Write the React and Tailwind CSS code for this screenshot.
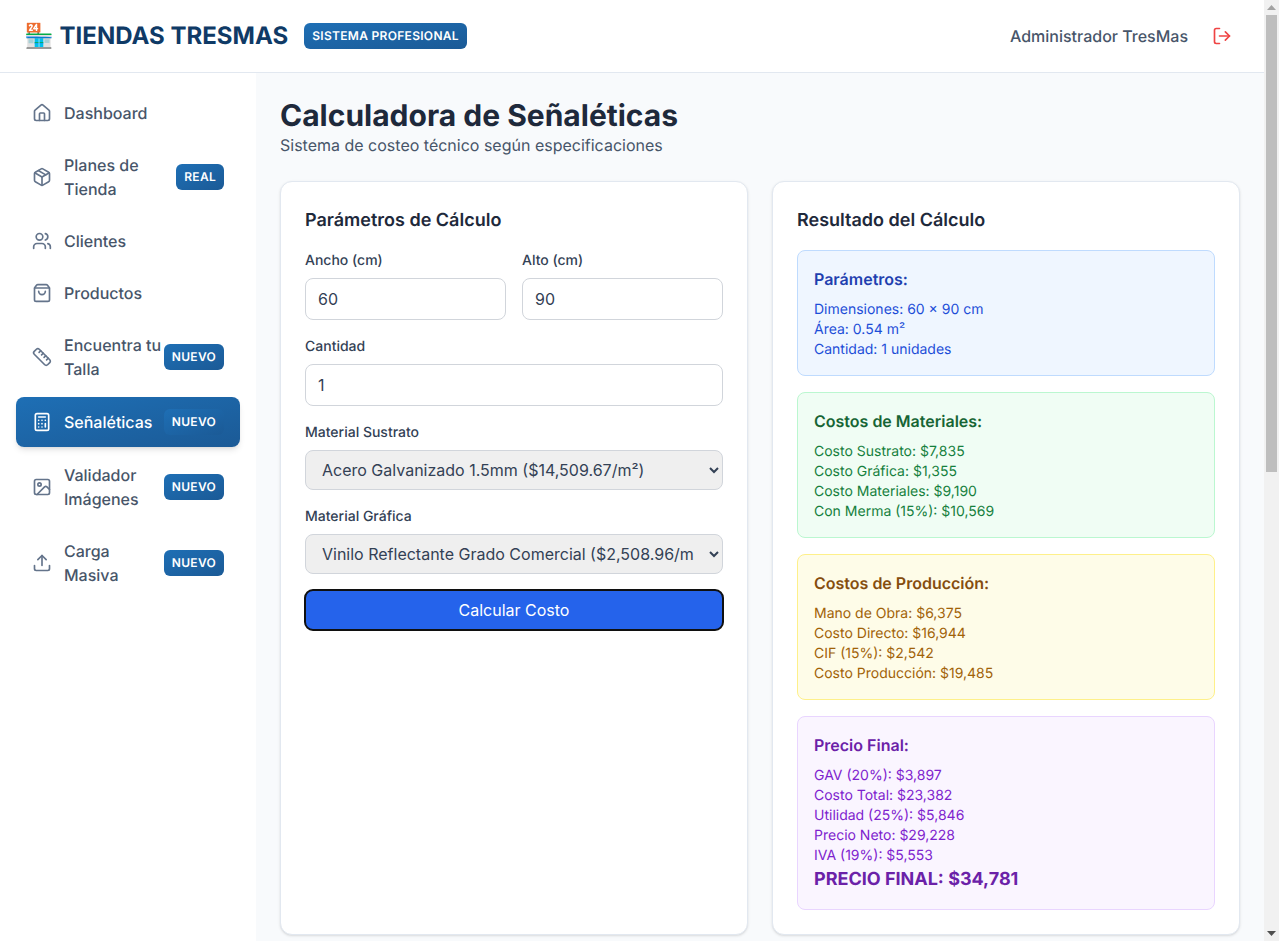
import { House, Package, Users, ShoppingBag, Ruler, Calculator, Image, Upload, LogOut } from "lucide-react";

const navItems = [
  { label: "Dashboard", icon: House },
  { label: "Planes de Tienda", icon: Package, badge: "REAL" },
  { label: "Clientes", icon: Users },
  { label: "Productos", icon: ShoppingBag },
  { label: "Encuentra tu Talla", icon: Ruler, badge: "NUEVO" },
  { label: "Señaléticas", icon: Calculator, badge: "NUEVO", active: true },
  { label: "Validador Imágenes", icon: Image, badge: "NUEVO" },
  { label: "Carga Masiva", icon: Upload, badge: "NUEVO" },
];

function Badge({ children }) {
  return (
    <span className="shrink-0 rounded-md bg-gradient-to-br from-[#1e6fb5] to-[#1b5a96] px-2 py-[5px] text-xs font-semibold tracking-wide text-white">
      {children}
    </span>
  );
}

function NavItem({ item }) {
  const Icon = item.icon;
  return (
    <a
      className={
        item.active
          ? "flex items-center justify-between rounded-lg bg-gradient-to-br from-[#1e6fb5] to-[#1b5a96] px-4 py-3 font-medium text-white shadow-md"
          : "flex items-center justify-between rounded-lg px-4 py-3 font-medium text-[#475569]"
      }
    >
      <div className="flex min-w-0 items-center gap-3">
        <Icon className={item.active ? "h-5 w-5 shrink-0 text-white" : "h-5 w-5 shrink-0 text-[#64748b]"} />
        <span>{item.label}</span>
      </div>
      {item.badge && <Badge>{item.badge}</Badge>}
    </a>
  );
}

function Field({ label, children }) {
  return (
    <div>
      <label className="mb-[7px] block pt-px text-sm font-medium text-[#334155]">{label}</label>
      {children}
    </div>
  );
}

function TextInput({ value }) {
  return (
    <input
      type="text"
      defaultValue={value}
      className="block w-full rounded-lg border border-[#d1d5db] bg-white px-3 py-2 text-base text-[#334155]"
    />
  );
}

function SelectInput({ value }) {
  return (
    <select className="block h-10 w-full rounded-lg border border-[#d1d5db] bg-[#efefef] px-3 text-base text-[#334155]">
      <option>{value}</option>
    </select>
  );
}

function ResultBox({ title, lines, box, heading, text, children }) {
  return (
    <div className={`rounded-lg border p-4 ${box}`}>
      <h3 className={`mb-2 font-semibold ${heading}`}>{title}</h3>
      <div className={`-mb-px pt-px text-sm ${text}`}>
        {lines.map((line) => (
          <p key={line}>{line}</p>
        ))}
        {children}
      </div>
    </div>
  );
}

// the page scrolls in the reference, and the browser here draws no scrollbar
function Scrollbar() {
  return (
    <div className="flex w-[15px] shrink-0 flex-col bg-[#f1f1f1]">
      <div className="flex h-[15px] items-center justify-center">
        <svg width="9" height="5" viewBox="0 0 9 5" className="fill-[#a3a3a3]">
          <polygon points="4.5,0 9,5 0,5" />
        </svg>
      </div>
      <div className="mx-[2px] h-[457px] w-[11px] bg-[#bebebe]" />
      <div className="flex-1" />
      <div className="flex h-[15px] items-center justify-center">
        <svg width="9" height="5" viewBox="0 0 9 5" className="fill-[#505050]">
          <polygon points="0,0 9,0 4.5,5" />
        </svg>
      </div>
    </div>
  );
}

export default function App() {
  return (
    <div className="flex h-screen overflow-hidden bg-[#f8fafc] font-['Inter',sans-serif] [text-rendering:geometricPrecision]">
      <div className="flex min-w-0 flex-1 flex-col overflow-hidden">
        <header className="flex h-[73px] shrink-0 items-center justify-between border-b border-[#e2e8f0] bg-white px-6">
          <div className="flex items-center gap-4">
            <h1 className="text-2xl font-bold text-[#0f3a66]">🏪 TIENDAS TRESMAS</h1>
            <Badge>SISTEMA PROFESIONAL</Badge>
          </div>
          <div className="flex items-center gap-4">
            <span className="font-medium text-[#475569]">Administrador TresMas</span>
            <button className="p-2 text-[#ef4444]">
              <LogOut className="h-5 w-5" />
            </button>
          </div>
        </header>

        <div className="flex flex-1">
          <aside className="w-64 shrink-0 bg-white p-4">
            <nav className="flex flex-col gap-1">
              {navItems.map((item) => (
                <NavItem key={item.label} item={item} />
              ))}
            </nav>
          </aside>

          <main className="min-w-0 flex-1 p-6">
            <h2 className="-mb-px pt-px text-3xl font-bold text-[#1e293b]">Calculadora de Señaléticas</h2>
            <p className="mb-6 text-[#475569]">Sistema de costeo técnico según especificaciones</p>

            <div className="grid grid-cols-2 gap-6">
              <section className="rounded-xl border border-[#e2e8f0] bg-white p-6 shadow-sm">
                <h3 className="mb-[15px] pt-px text-lg font-semibold text-[#1e293b]">Parámetros de Cálculo</h3>
                <div className="flex flex-col gap-4">
                  <div className="grid grid-cols-2 gap-4">
                    <Field label="Ancho (cm)">
                      <TextInput value="60" />
                    </Field>
                    <Field label="Alto (cm)">
                      <TextInput value="90" />
                    </Field>
                  </div>
                  <Field label="Cantidad">
                    <TextInput value="1" />
                  </Field>
                  <Field label="Material Sustrato">
                    <SelectInput value="Acero Galvanizado 1.5mm ($14,509.67/m²)" />
                  </Field>
                  <Field label="Material Gráfica">
                    <SelectInput value="Vinilo Reflectante Grado Comercial ($2,508.96/m²)" />
                  </Field>
                  <button className="h-10 w-full rounded-lg bg-[#2563eb] text-white outline-2 outline-offset-[-1px] outline-[#101010]">
                    Calcular Costo
                  </button>
                </div>
              </section>

              <section className="rounded-xl border border-[#e2e8f0] bg-white p-6 shadow-sm">
                <h3 className="mb-[15px] pt-px text-lg font-semibold text-[#1e293b]">Resultado del Cálculo</h3>
                <div className="flex flex-col gap-4">
                  <ResultBox
                    title="Parámetros:"
                    box="border-[#bfdbfe] bg-[#eff6ff]"
                    heading="text-[#1e40af]"
                    text="text-[#1d4ed8]"
                    lines={["Dimensiones: 60 × 90 cm", "Área: 0.54 m²", "Cantidad: 1 unidades"]}
                  />
                  <ResultBox
                    title="Costos de Materiales:"
                    box="border-[#bbf7d0] bg-[#f0fdf4]"
                    heading="text-[#166534]"
                    text="text-[#15803d]"
                    lines={["Costo Sustrato: $7,835", "Costo Gráfica: $1,355", "Costo Materiales: $9,190", "Con Merma (15%): $10,569"]}
                  />
                  <ResultBox
                    title="Costos de Producción:"
                    box="border-[#fef08a] bg-[#fefce8]"
                    heading="text-[#854d0e]"
                    text="text-[#a16207]"
                    lines={["Mano de Obra: $6,375", "Costo Directo: $16,944", "CIF (15%): $2,542", "Costo Producción: $19,485"]}
                  />
                  <ResultBox
                    title="Precio Final:"
                    box="border-[#e9d5ff] bg-[#faf5ff]"
                    heading="text-[#6b21a8]"
                    text="text-[#7e22ce]"
                    lines={["GAV (20%): $3,897", "Costo Total: $23,382", "Utilidad (25%): $5,846", "Precio Neto: $29,228", "IVA (19%): $5,553"]}
                  >
                    <p className="text-lg font-bold text-[#6b21a8]">PRECIO FINAL: $34,781</p>
                  </ResultBox>
                </div>
              </section>
            </div>
          </main>
        </div>
      </div>
      <Scrollbar />
    </div>
  );
}
